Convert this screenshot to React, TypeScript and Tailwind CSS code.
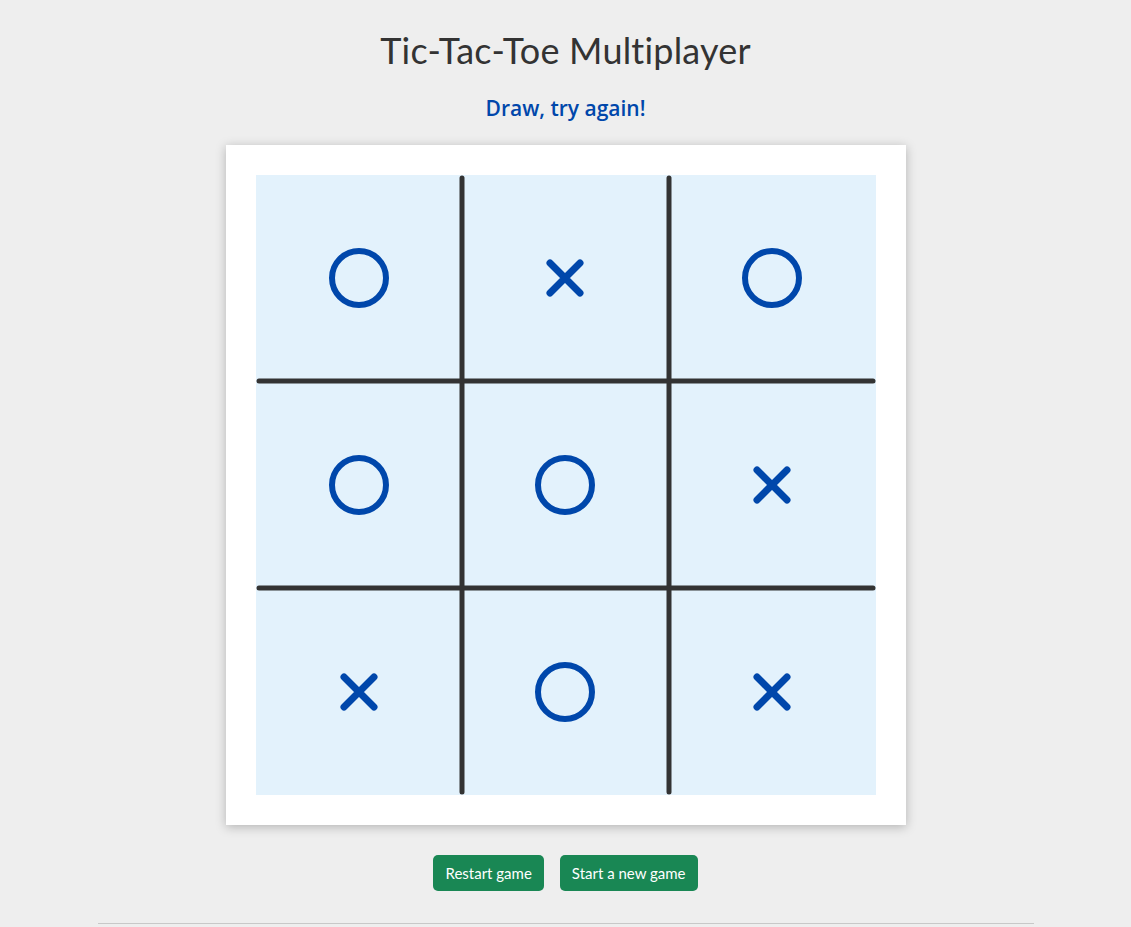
const board = ["O", "X", "O", "O", "O", "X", "X", "O", "X"];

function Mark({ v }: { v: string }) {
  if (v === "O") {
    return (
      <svg width="64" height="64" viewBox="0 0 64 64">
        <circle cx="32" cy="32" r="27" fill="none" stroke="#0047ab" strokeWidth="6" />
      </svg>
    );
  }
  return (
    <svg width="44" height="44" viewBox="0 0 44 44">
      <path d="M7 7 L37 37 M37 7 L7 37" stroke="#0047ab" strokeWidth="7" strokeLinecap="round" />
    </svg>
  );
}

export default function App() {
  return (
    <div
      className="min-h-[927px] bg-[#eeeeee] flex flex-col items-center text-[#333333]"
      style={{ fontFamily: "Lato, 'Noto Sans', sans-serif" }}
    >
      <h1 className="pt-[29px] text-[36px] leading-[43px] font-normal tracking-[0.2px]">Tic-Tac-Toe Multiplayer</h1>
      <h2
        className="mt-[24px] text-[21px] leading-[24px] font-semibold text-[#0047ab]"
        style={{ fontFamily: "'Open Sans', Lato, sans-serif" }}
      >
        Draw, try again!
      </h2>

      <div className="mt-[25px] w-[680px] h-[680px] bg-white p-[30px] shadow-[0_2px_10px_rgba(0,0,0,0.25)]">
        <div className="relative w-[620px] h-[620px] grid grid-cols-3 grid-rows-3 bg-[#e3f2fc]">
          {board.map((v, i) => (
            <div key={i} className="flex items-center justify-center">
              <Mark v={v} />
            </div>
          ))}
          <svg className="absolute inset-0" width="620" height="620" viewBox="0 0 620 620">
            <g stroke="#333333" strokeWidth="5" strokeLinecap="round">
              <line x1="206" y1="3" x2="206" y2="617" />
              <line x1="413" y1="3" x2="413" y2="617" />
              <line x1="3" y1="206" x2="617" y2="206" />
              <line x1="3" y1="413" x2="617" y2="413" />
            </g>
          </svg>
        </div>
      </div>

      <div className="mt-[30px] flex gap-4">
        <button className="h-[36px] px-3 rounded-[5px] bg-[#198754] text-white text-[15px]">Restart game</button>
        <button className="h-[36px] px-3 rounded-[5px] bg-[#198754] text-white text-[15px]">Start a new game</button>
      </div>

      <hr className="mt-[32px] w-[936px] border-t border-[#c8c8c8]" />
    </div>
  );
}
